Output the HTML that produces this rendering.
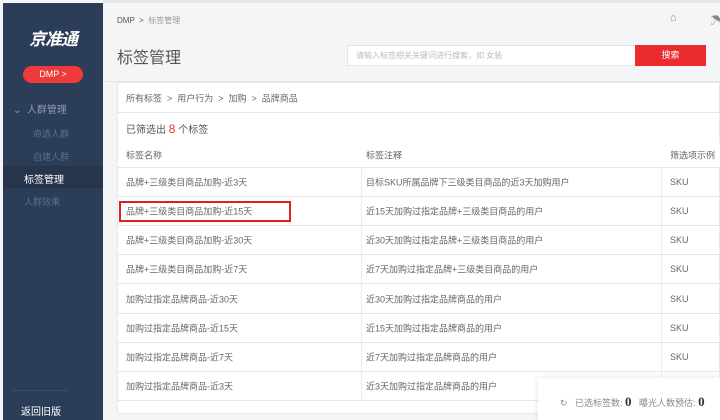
<!DOCTYPE html>
<html><head><meta charset="utf-8"><style>
*{margin:0;padding:0;box-sizing:border-box}
body{width:720px;height:420px;overflow:hidden;background:#f4f5f7;font-family:"Liberation Sans","Noto Sans CJK SC",sans-serif;position:relative;color:#555}
.sb{position:absolute;left:3px;top:3px;width:100px;height:417px;background:#2c3d57}
.abs{position:absolute}
.side{position:absolute;left:0;width:100px;font-size:10px;color:#6d7c93}
.main{position:absolute;left:103px;top:0;right:0;height:3px;background:#e6e6e6}
.card{position:absolute;left:117px;top:82px;width:603px;height:332px;background:#fff;border:1px solid #e8e8e8}
.row{position:absolute;left:0;width:603px;border-bottom:1px solid #e6e6e6;font-size:9px;color:#666}
.row span{position:absolute;top:50%;transform:translateY(-50%);white-space:nowrap}
.vl{position:absolute;top:85px;width:1px;height:233px;background:#ececec}
</style></head><body>
<div class="sb">
 <div class="abs" style="left:26px;top:22px;color:#fff;font-size:17px;font-style:italic;font-weight:bold;letter-spacing:-1px">京准通</div>
 <div class="abs" style="left:20px;top:63px;width:60px;height:17px;border-radius:9px;background:#ee3a3a;color:#fff;font-size:9px;text-align:center;line-height:17px">DMP &gt;</div>
 <div class="side" style="top:98px;left:10px;color:#8d9ab0;font-size:10px">⌄&nbsp; 人群管理</div>
 <div class="side" style="top:124px;left:30px;color:#5e6e86;font-size:9px">命选人群</div>
 <div class="side" style="top:147px;left:30px;color:#5e6e86;font-size:9px">自建人群</div>
 <div class="abs" style="top:163px;left:0;width:100px;height:22px;background:#26354c"></div>
 <div class="side" style="top:168px;left:21px;color:#fff;font-size:10px">标签管理</div>
 <div class="side" style="top:192px;left:21px;color:#5e6e86;font-size:9px">人群效果</div>
 <div class="abs" style="left:10px;top:387px;width:54px;height:1px;background:#3d4e68"></div>
 <div class="side" style="top:400px;left:18px;color:#fff;font-size:10px">返回旧版</div>
</div>
<div class="main"></div>
<div class="abs" style="left:117px;top:15px;font-size:8px;color:#555">DMP &nbsp;&gt;&nbsp; <span style="color:#999">标签管理</span></div>
<div class="abs" style="left:670px;top:12px;font-size:11px;color:#888">⌂</div>
<div class="abs" style="left:710px;top:12px;font-size:11px;color:#888">☂</div>
<div class="abs" style="left:117px;top:44px;font-size:16px;color:#555">标签管理</div>
<div class="abs" style="left:347px;top:45px;width:289px;height:21px;background:#fff;border:1px solid #e4e4e4;font-size:8px;color:#bbb;line-height:19px;padding-left:8px">请输入标签相关关键词进行搜索，如 女装</div>
<div class="abs" style="left:635px;top:45px;width:71px;height:21px;background:#eb2c2e;color:#fff;font-size:9px;text-align:center;line-height:21px">搜索</div>
<div class="abs" style="left:103px;top:81px;width:617px;height:1px;background:#e6e6e6"></div>
<div class="card">
 <div class="row" style="top:0;height:30px"><span style="left:8px">所有标签 &nbsp;&gt;&nbsp; 用户行为 &nbsp;&gt;&nbsp; 加购 &nbsp;&gt;&nbsp; 品牌商品</span></div>
 <div class="abs" style="left:8px;top:38px;font-size:10px;color:#555">已筛选出 <span style="color:#e33;font-size:12px">8</span> 个标签</div>
 <div class="row" style="top:60px;height:25px;background:#fff"><span style="left:8px">标签名称</span><span style="left:248px">标签注释</span><span style="left:552px">筛选项示例</span></div>
 <div class="row" style="top:85px;height:29px"><span style="left:8px">品牌+三级类目商品加购-近3天</span><span style="left:248px">目标SKU所属品牌下三级类目商品的近3天加购用户</span><span style="left:552px">SKU</span></div>
 <div class="row" style="top:114px;height:29px"><span style="left:8px">品牌+三级类目商品加购-近15天</span><span style="left:248px">近15天加购过指定品牌+三级类目商品的用户</span><span style="left:552px">SKU</span></div>
 <div class="abs" style="left:1px;top:118px;width:172px;height:21px;border:2px solid #e02020"></div>
 <div class="row" style="top:143px;height:29px"><span style="left:8px">品牌+三级类目商品加购-近30天</span><span style="left:248px">近30天加购过指定品牌+三级类目商品的用户</span><span style="left:552px">SKU</span></div>
 <div class="row" style="top:172px;height:29px"><span style="left:8px">品牌+三级类目商品加购-近7天</span><span style="left:248px">近7天加购过指定品牌+三级类目商品的用户</span><span style="left:552px">SKU</span></div>
 <div class="row" style="top:201px;height:30px"><span style="left:8px">加购过指定品牌商品-近30天</span><span style="left:248px">近30天加购过指定品牌商品的用户</span><span style="left:552px">SKU</span></div>
 <div class="row" style="top:231px;height:29px"><span style="left:8px">加购过指定品牌商品-近15天</span><span style="left:248px">近15天加购过指定品牌商品的用户</span><span style="left:552px">SKU</span></div>
 <div class="row" style="top:260px;height:29px"><span style="left:8px">加购过指定品牌商品-近7天</span><span style="left:248px">近7天加购过指定品牌商品的用户</span><span style="left:552px">SKU</span></div>
 <div class="row" style="top:289px;height:29px"><span style="left:8px">加购过指定品牌商品-近3天</span><span style="left:248px">近3天加购过指定品牌商品的用户</span><span style="left:552px">SKU</span></div>
 <div class="vl" style="left:243px"></div>
 <div class="vl" style="left:543px"></div>
</div>
<div class="abs" style="left:538px;top:378px;width:182px;height:42px;background:#fff;box-shadow:0 0 6px rgba(0,0,0,.12)">
 <div class="abs" style="left:22px;top:16px;font-size:9px;color:#888;white-space:nowrap">↻ &nbsp; 已选标签数: <b style="font-family:'Liberation Serif',serif;font-size:13px;color:#333">0</b> &nbsp; 曝光人数预估: <b style="font-family:'Liberation Serif',serif;font-size:13px;color:#333">0</b></div>
</div>
</body></html>
